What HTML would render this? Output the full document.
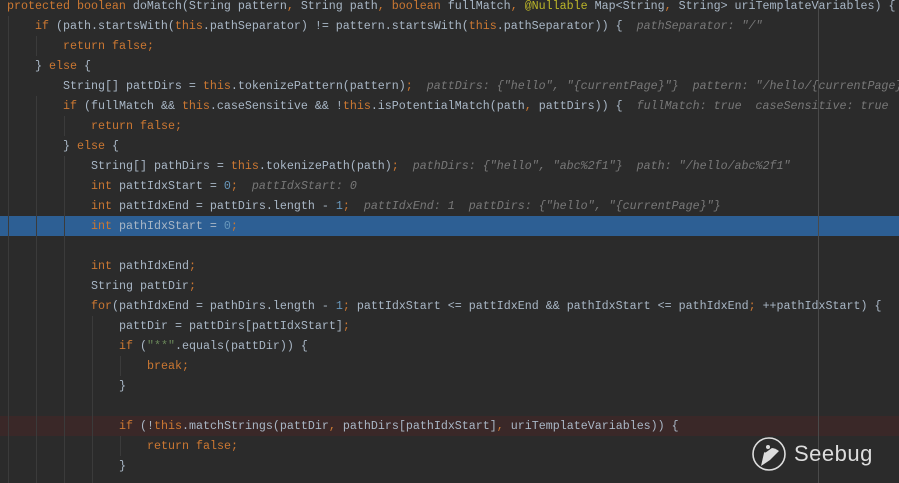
<!DOCTYPE html><html><head><style>
body{margin:0;width:899px;height:483px;background:#2b2b2b;overflow:hidden;position:relative;font-family:"Liberation Mono",monospace;font-size:11.67px;color:#a9b7c6}
.l{position:absolute;left:0;height:20px;line-height:20px;white-space:pre;width:899px}
.k{color:#cc7832}.n{color:#6897bb}.s{color:#6a8759}.a{color:#bbb529}.h{color:#787878;font-style:italic}
.g{position:absolute;width:1px;background:#3b3b3b}
</style></head><body>
<div class="l" style="top:216px;background:#2d5f94"></div>
<div class="l" style="top:416px;background:#3a2828"></div>
<div class="g" style="left:8px;top:16px;height:467px"></div>
<div class="g" style="left:36px;top:36px;height:20px"></div>
<div class="g" style="left:36px;top:96px;height:387px"></div>
<div class="g" style="left:64px;top:116px;height:20px"></div>
<div class="g" style="left:64px;top:156px;height:327px"></div>
<div class="g" style="left:92px;top:316px;height:167px"></div>
<div class="g" style="left:120px;top:356px;height:20px"></div>
<div class="g" style="left:120px;top:436px;height:20px"></div>
<div class="g" style="left:818px;top:0;height:483px;background:#4a4a4a"></div>
<div class="l" style="top:-4px;left:7px"><span class="k">protected boolean </span>doMatch(String pattern<span class="k">, </span>String path<span class="k">, boolean </span>fullMatch<span class="k">, </span><span class="a">@Nullable </span>Map&lt;String<span class="k">, </span>String&gt; uriTemplateVariables) {</div>
<div class="l" style="top:16px;left:35px"><span class="k">if </span>(path.startsWith(<span class="k">this</span>.pathSeparator) != pattern.startsWith(<span class="k">this</span>.pathSeparator)) {  <span class="h">pathSeparator: "/"</span></div>
<div class="l" style="top:36px;left:63px"><span class="k">return false;</span></div>
<div class="l" style="top:56px;left:35px">} <span class="k">else </span>{</div>
<div class="l" style="top:76px;left:63px">String[] pattDirs = <span class="k">this</span>.tokenizePattern(pattern)<span class="k">;</span>  <span class="h">pattDirs: {"hello", "{currentPage}"}  pattern: "/hello/{currentPage}"</span></div>
<div class="l" style="top:96px;left:63px"><span class="k">if </span>(fullMatch &amp;&amp; <span class="k">this</span>.caseSensitive &amp;&amp; !<span class="k">this</span>.isPotentialMatch(path<span class="k">, </span>pattDirs)) {  <span class="h">fullMatch: true  caseSensitive: true</span></div>
<div class="l" style="top:116px;left:91px"><span class="k">return false;</span></div>
<div class="l" style="top:136px;left:63px">} <span class="k">else </span>{</div>
<div class="l" style="top:156px;left:91px">String[] pathDirs = <span class="k">this</span>.tokenizePath(path)<span class="k">;</span>  <span class="h">pathDirs: {"hello", "abc%2f1"}  path: "/hello/abc%2f1"</span></div>
<div class="l" style="top:176px;left:91px"><span class="k">int </span>pattIdxStart = <span class="n">0</span><span class="k">;</span>  <span class="h">pattIdxStart: 0</span></div>
<div class="l" style="top:196px;left:91px"><span class="k">int </span>pattIdxEnd = pattDirs.length - <span class="n">1</span><span class="k">;</span>  <span class="h">pattIdxEnd: 1  pattDirs: {"hello", "{currentPage}"}</span></div>
<div class="l" style="top:216px;left:91px"><span class="k">int </span>pathIdxStart = <span class="n">0</span><span class="k">;</span></div>
<div class="l" style="top:256px;left:91px"><span class="k">int </span>pathIdxEnd<span class="k">;</span></div>
<div class="l" style="top:276px;left:91px">String pattDir<span class="k">;</span></div>
<div class="l" style="top:296px;left:91px"><span class="k">for</span>(pathIdxEnd = pathDirs.length - <span class="n">1</span><span class="k">; </span>pattIdxStart &lt;= pattIdxEnd &amp;&amp; pathIdxStart &lt;= pathIdxEnd<span class="k">; </span>++pathIdxStart) {</div>
<div class="l" style="top:316px;left:119px">pattDir = pattDirs[pattIdxStart]<span class="k">;</span></div>
<div class="l" style="top:336px;left:119px"><span class="k">if </span>(<span class="s">"**"</span>.equals(pattDir)) {</div>
<div class="l" style="top:356px;left:147px"><span class="k">break;</span></div>
<div class="l" style="top:376px;left:119px">}</div>
<div class="l" style="top:416px;left:119px;width:700px"><span class="k">if </span>(!<span class="k">this</span>.matchStrings(pattDir<span class="k">, </span>pathDirs[pathIdxStart]<span class="k">, </span>uriTemplateVariables)) {</div>
<div class="l" style="top:436px;left:147px"><span class="k">return false;</span></div>
<div class="l" style="top:456px;left:119px">}</div>
<svg style="position:absolute;left:750px;top:436px" width="40" height="40" viewBox="0 0 40 40"><circle cx="19" cy="18" r="16" fill="none" stroke="#ddd" stroke-width="1.6"/><path d="M11 30 L14 17 Q20 8 29 15 L20 24 Z" fill="#ddd"/><path d="M15 16 L22 11" stroke="#2b2b2b" stroke-width="1.5"/><circle cx="18" cy="11" r="2" fill="#ddd"/></svg>
<div style="position:absolute;left:794px;top:441px;font-family:'Liberation Sans',sans-serif;font-size:22px;color:#ddd;letter-spacing:0.5px">Seebug</div>
</body></html>
